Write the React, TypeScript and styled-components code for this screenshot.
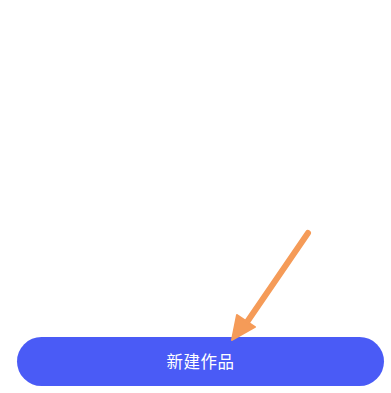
import styled, { createGlobalStyle } from 'styled-components'

const GlobalStyle = createGlobalStyle`
  html, body {
    margin: 0;
    padding: 0;
    background: #ffffff;
  }
  body {
    font-family: 'Noto Sans CJK SC', 'Noto Sans', sans-serif;
  }
`

const App = () => {
  return (
    <>
      <GlobalStyle />
      <Screen>
        <Footer>
          <CreateButton>新建作品</CreateButton>
          <Pointer viewBox='0 0 90 120' aria-hidden='true'>
            <line x1='81' y1='5' x2='18' y2='97' stroke='#f59b58' strokeWidth='6' strokeLinecap='round' />
            <polygon points='5,112 10,87 28,99' fill='#f59b58' stroke='#f59b58' strokeWidth='2' strokeLinejoin='round' />
          </Pointer>
        </Footer>
      </Screen>
    </>
  )
}

export default App

const Screen = styled.div`
  width: 391px;
  height: 393px;
  display: flex;
  flex-direction: column;
  justify-content: flex-end;
  padding: 0 7px 7px 17px;
  box-sizing: border-box;
  background: #ffffff;
`

const Footer = styled.div`
  position: relative;
`

const CreateButton = styled.button`
  width: 100%;
  height: 49px;
  border: none;
  border-radius: 25px;
  background: #4a5bf6;
  color: #ffffff;
  font-family: 'Noto Sans CJK SC', 'Noto Sans', sans-serif;
  font-size: 16.5px;
  letter-spacing: 0.5px;
  display: flex;
  align-items: center;
  justify-content: center;
  padding: 0 0 2px;
`

const Pointer = styled.svg`
  position: absolute;
  left: 210px;
  top: -109px;
  width: 90px;
  height: 120px;
  overflow: visible;
`
